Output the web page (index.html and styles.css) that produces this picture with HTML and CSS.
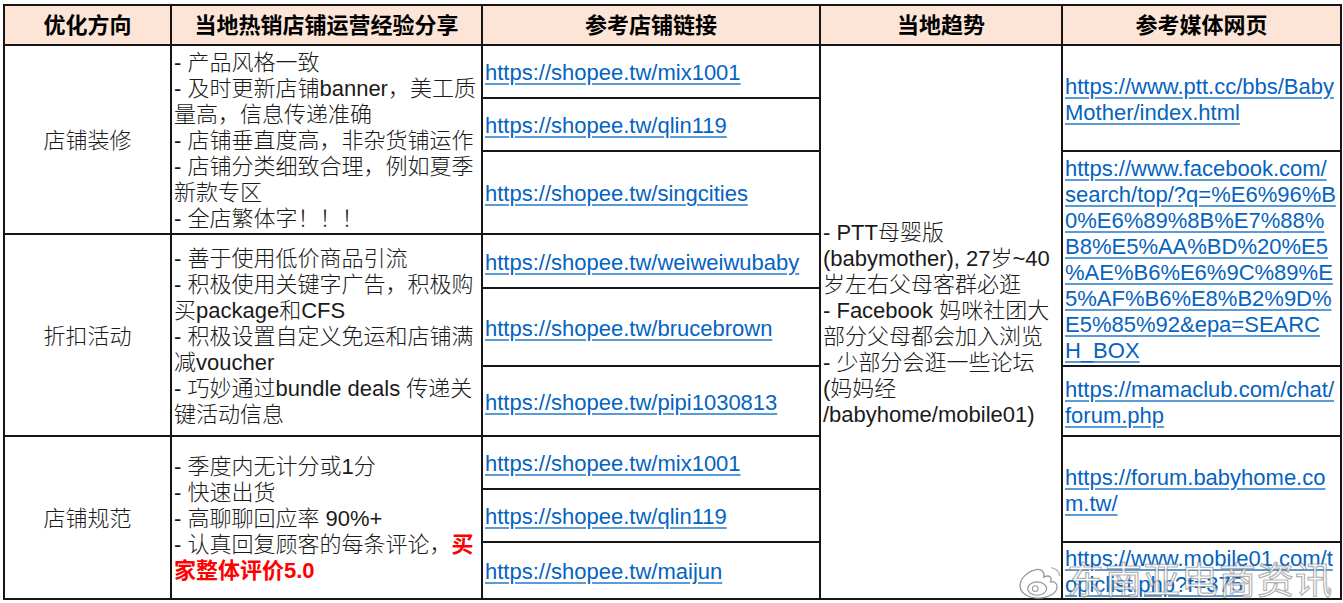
FILE: index.html
```html
<!DOCTYPE html>
<html lang="zh-CN">
<head>
<meta charset="utf-8">
<title>优化方向</title>
<link rel="stylesheet" href="styles.css">
</head>
<body>
<div class="sheet">
<table class="grid">
  <colgroup>
    <col class="c1"><col class="c2"><col class="c3"><col class="c4"><col class="c5">
  </colgroup>
  <thead>
    <tr class="rh">
      <th>优化方向</th>
      <th>当地热销店铺运营经验分享</th>
      <th>参考店铺链接</th>
      <th>当地趋势</th>
      <th>参考媒体网页</th>
    </tr>
  </thead>
  <tbody>
    <tr class="ra1">
      <td class="cat" rowspan="3">店铺装修</td>
      <td class="tips" rowspan="3">- 产品风格一致<br>- 及时更新店铺banner，美工质<br>量高，信息传递准确<br>- 店铺垂直度高，非杂货铺运作<br>- 店铺分类细致合理，例如夏季<br>新款专区<br>- 全店繁体字！！！</td>
      <td class="link"><a href="#">https://shopee.tw/mix1001</a></td>
      <td class="trend" rowspan="9">- PTT母婴版<br>(babymother), 27岁~40<br>岁左右父母客群必逛<br>- Facebook 妈咪社团大<br>部分父母都会加入浏览<br>- 少部分会逛一些论坛<br>(妈妈经<br>/babyhome/mobile01)</td>
      <td class="media" rowspan="2"><a href="#">https://www.ptt.cc/bbs/Baby<br>Mother/index.html</a></td>
    </tr>
    <tr class="ra2">
      <td class="link"><a href="#">https://shopee.tw/qlin119</a></td>
    </tr>
    <tr class="ra3">
      <td class="link"><a href="#">https://shopee.tw/singcities</a></td>
      <td class="media" rowspan="3"><a href="#">https://www.facebook.com/<br>search/top/?q=%E6%96%B<br>0%E6%89%8B%E7%88%<br>B8%E5%AA%BD%20%E5<br>%AE%B6%E6%9C%89%E<br>5%AF%B6%E8%B2%9D%<br>E5%85%92&amp;epa=SEARC<br>H_BOX</a></td>
    </tr>
    <tr class="rb1">
      <td class="cat" rowspan="3">折扣活动</td>
      <td class="tips" rowspan="3">- 善于使用低价商品引流<br>- 积极使用关键字广告，积极购<br>买package和CFS<br>- 积极设置自定义免运和店铺满<br>减voucher<br>- 巧妙通过bundle deals 传递关<br>键活动信息</td>
      <td class="link"><a href="#">https://shopee.tw/weiweiwubaby</a></td>
    </tr>
    <tr class="rb2">
      <td class="link"><a href="#">https://shopee.tw/brucebrown</a></td>
    </tr>
    <tr class="rb3">
      <td class="link"><a href="#">https://shopee.tw/pipi1030813</a></td>
      <td class="media"><a href="#">https://mamaclub.com/chat/<br>forum.php</a></td>
    </tr>
    <tr class="rc1">
      <td class="cat" rowspan="3">店铺规范</td>
      <td class="tips" rowspan="3">- 季度内无计分或1分<br>- 快速出货<br>- 高聊聊回应率 90%+<br>- 认真回复顾客的每条评论，<span class="hot">买<br>家整体评价5.0</span></td>
      <td class="link"><a href="#">https://shopee.tw/mix1001</a></td>
      <td class="media" rowspan="2"><a href="#">https://forum.babyhome.co<br>m.tw/</a></td>
    </tr>
    <tr class="rc2">
      <td class="link"><a href="#">https://shopee.tw/qlin119</a></td>
    </tr>
    <tr class="rc3">
      <td class="link"><a href="#">https://shopee.tw/maijun</a></td>
      <td class="media"><a href="#">https://www.mobile01.com/t<br>opiclist.php?f=375</a></td>
    </tr>
  </tbody>
</table>
<div class="watermark">
  <svg class="wb-logo" viewBox="0 0 48 40" width="46" height="38" aria-hidden="true">
    <path d="M20 8 C10 10 3 18 3 25 C3 33 12 38 22 38 C34 38 42 32 42 26 C42 22 38 20 35 21 C37 16 34 13 28 16 C29 11 26 7 20 8 Z" fill="rgba(255,255,255,0.85)" stroke="#9a9a9a" stroke-width="1.4"/>
    <ellipse cx="21" cy="28" rx="10" ry="7" fill="none" stroke="#9a9a9a" stroke-width="1.3"/>
    <circle cx="19" cy="28" r="3" fill="none" stroke="#9a9a9a" stroke-width="1.1"/>
    <path d="M36 6 C41 7 44 10 45 15" fill="none" stroke="#b0b0b0" stroke-width="1.3"/>
  </svg>
  <span class="wb-text">东南亚电商资讯</span>
</div>
</div>
</body>
</html>
```

FILE: styles.css
```css
html, body {
  margin: 0;
  padding: 0;
  background: #ffffff;
}

body {
  font-family: "Liberation Sans", "Noto Sans CJK SC", sans-serif;
  color: #111111;
}

.sheet {
  position: relative;
  padding: 4px 0 0 3px;
  width: 1343px;
  height: 603px;
  box-sizing: border-box;
  overflow: hidden;
}

.grid {
  border-collapse: collapse;
  table-layout: fixed;
  width: 1337px;
}

.c1 { width: 167px; }
.c2 { width: 311px; }
.c3 { width: 338px; }
.c4 { width: 242px; }
.c5 { width: 279px; }

.grid th,
.grid td {
  border: 2px solid #161616;
  padding: 3px 2px 0 2px;
  font-size: 22px;
  line-height: 26px;
  vertical-align: middle;
  overflow: visible;
  white-space: nowrap;
  text-align: left;
  font-weight: 300;
}

.grid th {
  background: #fce4d6;
  font-weight: bold;
  text-align: center;
  color: #000000;
  padding-top: 2px;
}

.rh { height: 40px; }
.ra1 { height: 53px; }
.ra2 { height: 53px; }
.ra3 { height: 83px; }
.rb1 { height: 54px; }
.rb2 { height: 78px; }
.rb3 { height: 70px; }
.rc1 { height: 53px; }
.rc2 { height: 53px; }
.rc3 { height: 56px; }

.grid .cat {
  text-align: center;
  color: #1a1a1a;
}

.tips,
.trend {
  color: #1a1a1a;
}

.grid a {
  color: #0563c1;
  text-decoration: underline;
  text-decoration-color: #5b9bd5;
  text-decoration-thickness: 1.5px;
  text-underline-offset: 3px;
}

.hot {
  color: #ff0000;
  font-weight: bold;
}

.watermark {
  position: absolute;
  right: 10px;
  bottom: 3px;
  display: flex;
  align-items: center;
  gap: 4px;
  pointer-events: none;
}

.wb-logo {
  display: block;
  margin-top: 6px;
}

.wb-text {
  font-family: "Noto Sans CJK SC", sans-serif;
  font-size: 37px;
  line-height: 44px;
  font-weight: normal;
  letter-spacing: 1px;
  color: rgba(255, 255, 255, 0.72);
  -webkit-text-stroke: 1.2px rgba(110, 110, 110, 0.55);
}
```
